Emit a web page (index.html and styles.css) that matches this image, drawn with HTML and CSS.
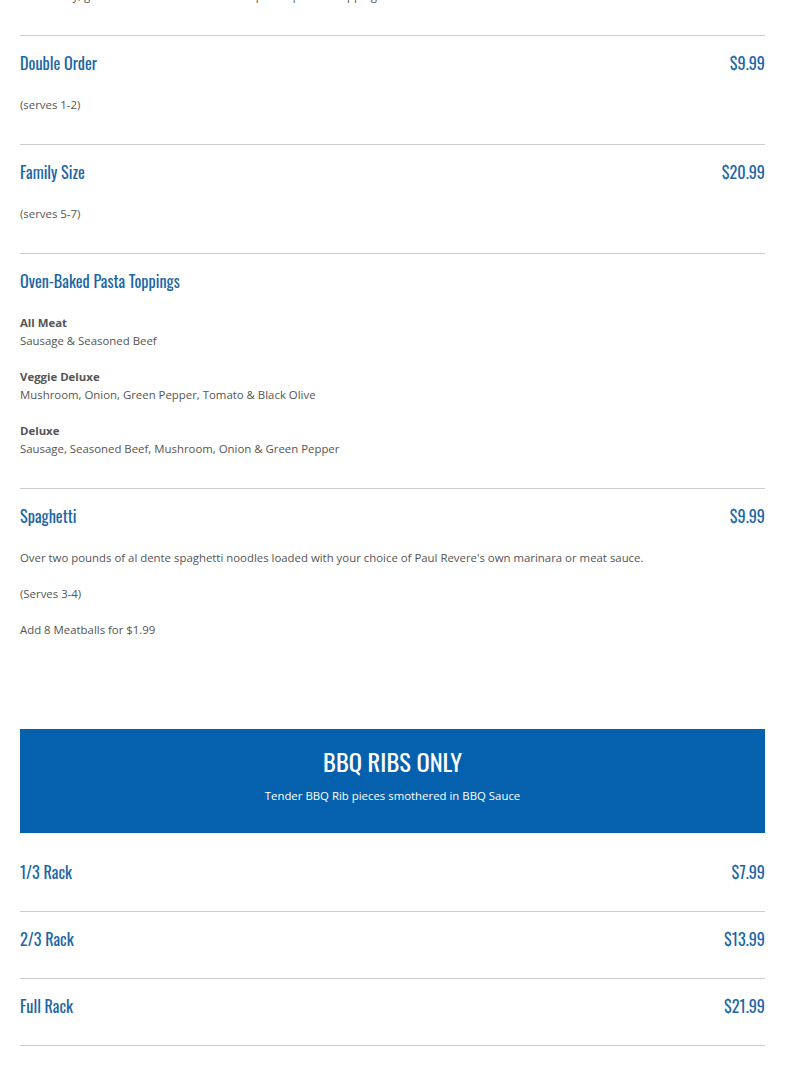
FILE: index.html
```html
<!DOCTYPE html>
<html lang="en">
<head>
<meta charset="utf-8">
<title>Menu</title>
<link rel="stylesheet" href="styles.css">
</head>
<body>
<main class="menu">
  <section class="category">
    <div class="item">
      <div class="item-head"><h3 class="item-name">Single Order</h3><span class="item-price">$5.99</span></div>
      <div class="desc">
        <p>Our savory, garlic cream sauce baked with a pan of pasta &amp; topping.</p>
      </div>
    </div>
    <div class="item">
      <div class="item-head"><h3 class="item-name">Double Order</h3><span class="item-price">$9.99</span></div>
      <div class="desc"><p>(serves 1-2)</p></div>
    </div>
    <div class="item">
      <div class="item-head"><h3 class="item-name">Family Size</h3><span class="item-price">$20.99</span></div>
      <div class="desc"><p>(serves 5-7)</p></div>
    </div>
    <div class="item">
      <div class="item-head"><h3 class="item-name">Oven-Baked Pasta Toppings</h3></div>
      <div class="desc">
        <p><strong>All Meat</strong><br>Sausage &amp; Seasoned Beef</p>
        <p><strong>Veggie Deluxe</strong><br>Mushroom, Onion, Green Pepper, Tomato &amp; Black Olive</p>
        <p><strong>Deluxe</strong><br>Sausage, Seasoned Beef, Mushroom, Onion &amp; Green Pepper</p>
      </div>
    </div>
    <div class="item">
      <div class="item-head"><h3 class="item-name">Spaghetti</h3><span class="item-price">$9.99</span></div>
      <div class="desc">
        <p>Over two pounds of al dente spaghetti noodles loaded with your choice of Paul Revere's own marinara or meat sauce.</p>
        <p>(Serves 3-4)</p>
        <p>Add 8 Meatballs for $1.99</p>
      </div>
    </div>
  </section>

  <section class="category">
    <header class="cat-head">
      <h2 class="cat-title">BBQ RIBS ONLY</h2>
      <p class="cat-sub">Tender BBQ Rib pieces smothered in BBQ Sauce</p>
    </header>
    <div class="item">
      <div class="item-head"><h3 class="item-name">1/3 Rack</h3><span class="item-price">$7.99</span></div>
    </div>
    <div class="item">
      <div class="item-head"><h3 class="item-name">2/3 Rack</h3><span class="item-price">$13.99</span></div>
    </div>
    <div class="item">
      <div class="item-head"><h3 class="item-name">Full Rack</h3><span class="item-price">$21.99</span></div>
    </div>
  </section>
</main>
</body>
</html>
```

FILE: styles.css
```css
html, body {
  margin: 0;
  padding: 0;
  background: #fff;
}
body {
  font-family: "Open Sans", "Liberation Sans", sans-serif;
  font-size: 11.4px;
  line-height: 18px;
  color: #555;
}
.menu {
  padding: 0 20px;
  margin-top: -73px;
}
.category + .category {
  margin-top: 60px;
}
.item {
  padding: 16px 0 28px;
  border-bottom: 1px solid #ccc;
}
.category .item:last-child {
  border-bottom: 0;
}
.item-head {
  display: flex;
  justify-content: space-between;
  align-items: center;
  height: 22px;
}
.item-name,
.item-price {
  margin: 0;
  font-family: "Oswald", "Liberation Sans Narrow", "DejaVu Sans Condensed", sans-serif;
  font-weight: 400;
  font-size: 16.2px;
  line-height: 22px;
  color: #1b66a7;
}
.desc {
  margin: 22px 0 2px;
}
.desc p {
  margin: 0;
}
.desc p + p {
  margin-top: 18px;
}
.desc strong {
  font-weight: 700;
}
.cat-head {
  background: #0561ad;
  color: #fff;
  text-align: center;
  padding: 16px 20px 28px;
  margin-bottom: 12px;
}
.cat-title {
  margin: 0;
  font-family: "Oswald", "Liberation Sans Narrow", "DejaVu Sans Condensed", sans-serif;
  font-weight: 400;
  font-size: 24.5px;
  line-height: 32px;
}
.cat-sub {
  margin: 10px 0 0;
  line-height: 18px;
}
.category:last-child .item:last-child {
  border-bottom: 1px solid #ccc;
}
```
